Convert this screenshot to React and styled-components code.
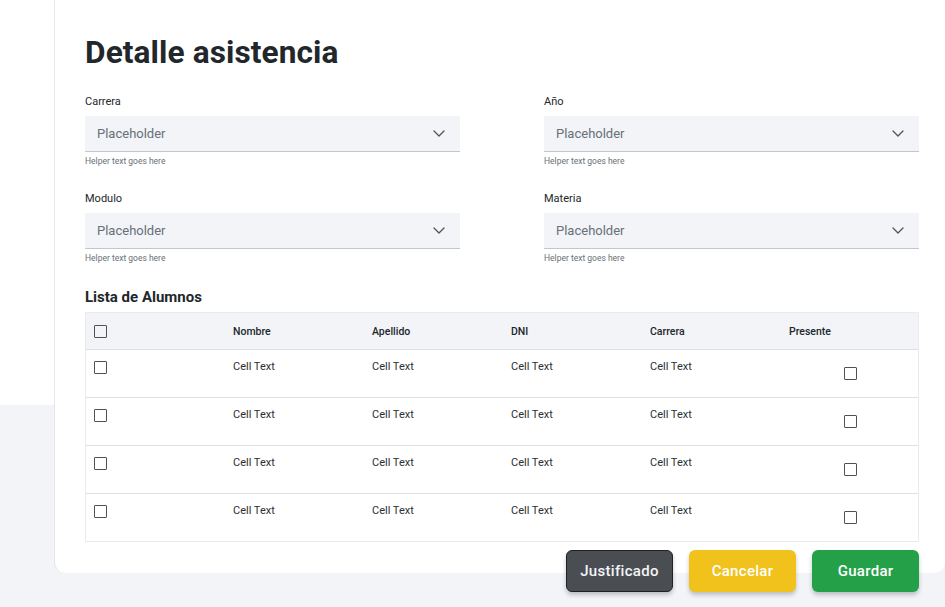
import React from 'react';
import styled, { createGlobalStyle } from 'styled-components';

const GlobalStyle = createGlobalStyle`
  body {
    margin: 0;
    background: #f2f4f8;
    font-family: Roboto, "Liberation Sans", sans-serif;
    color: #21272a;
  }
`;

const Page = styled.div`
  display: flex;
  align-items: flex-start;
  width: 945px;
  height: 607px;
  overflow: hidden;
`;

const SideFill = styled.div`
  width: 54px;
  height: 405px;
  background: #fff;
  flex-shrink: 0;
`;

const Card = styled.main`
  flex: 1;
  background: #fff;
  border-left: 1px solid #e4e6ea;
  border-radius: 0 0 11px 11px;
  padding: 34px 26px 0 30px;
  box-sizing: border-box;
  height: 573px;
`;

const Title = styled.h1`
  margin: 0;
  font-size: 31.6px;
  line-height: 38px;
  font-weight: 700;
  color: #21272a;
  letter-spacing: 0.1px;
`;

const FieldGrid = styled.div`
  display: grid;
  grid-template-columns: 1fr 1fr;
  column-gap: 84px;
  row-gap: 25px;
  margin-top: 23px;
`;

const Field = styled.div`
  display: flex;
  flex-direction: column;
`;

const Label = styled.label`
  font-size: 11px;
  line-height: 14px;
  color: #21272a;
  margin-bottom: 7px;
`;

const SelectBox = styled.div`
  display: flex;
  align-items: center;
  justify-content: space-between;
  height: 36px;
  padding: 0 15px 0 12px;
  background: #f2f4f8;
  border-bottom: 1px solid #c1c7cd;
  box-sizing: border-box;
  font-size: 13px;
  color: #697077;
`;

const Helper = styled.span`
  font-size: 8.5px;
  line-height: 11px;
  margin-top: 4px;
  color: #697077;
`;

const SectionTitle = styled.h2`
  margin: 24px 0 6px;
  font-size: 15px;
  line-height: 18px;
  font-weight: 700;
  color: #21272a;
`;

const Table = styled.div`
  border: 1px solid #e9ebee;
  border-top: none;
`;

const Row = styled.div`
  display: grid;
  grid-template-columns: 147px repeat(4, 139px) 1fr;
  height: ${p => (p.$head ? '37px' : '48px')};
  background: ${p => (p.$head ? '#f2f4f8' : '#fff')};
  border-top: 1px solid ${p => (p.$head ? '#e9ebee' : '#dde1e6')};
  box-sizing: border-box;
  align-items: ${p => (p.$head ? 'center' : 'start')};
`;

const Cell = styled.div`
  font-size: ${p => (p.$head ? '10.5px' : '11px')};
  font-weight: ${p => (p.$head ? 500 : 400)};
  line-height: 13px;
  color: ${p => (p.$head ? '#21272a' : '#2b3034')};
  padding-top: ${p => (p.$head ? '0' : '10px')};
`;

const CheckCell = styled.div`
  padding-left: 8px;
  padding-top: ${p => (p.$head ? '0' : '11px')};
  display: flex;
`;

const PresentCell = styled.div`
  display: flex;
  align-self: center;
  justify-content: center;
  padding-right: 7px;
`;

const Box = styled.span`
  display: block;
  width: 13px;
  height: 13px;
  border: 1.5px solid #4d5358;
  box-sizing: border-box;
  border-radius: 1px;
`;

const Actions = styled.div`
  display: flex;
  justify-content: flex-end;
  gap: 16px;
  margin-top: 8px;
`;

const Button = styled.button`
  width: 107px;
  height: 42px;
  border-radius: 6px;
  border: ${p => (p.$dark ? '1.5px solid #1f2224' : 'none')};
  background: ${p => p.$bg};
  color: ${p => (p.$dark ? '#f2f4f8' : '#fff')};
  font-family: Roboto, "Liberation Sans", sans-serif;
  font-size: 15px;
  font-weight: 500;
  letter-spacing: 0.3px;
  box-shadow: 0 3px 4px rgba(0, 0, 0, 0.22);
  cursor: pointer;
`;

const Chevron = () => (
  <svg width="12" height="7" viewBox="0 0 12 7" fill="none">
    <path d="M1 1l5 5 5-5" stroke="#4d5358" strokeWidth="1.3" strokeLinecap="round" strokeLinejoin="round" />
  </svg>
);

const fields = ['Carrera', 'Año', 'Modulo', 'Materia'];
const columns = ['Nombre', 'Apellido', 'DNI', 'Carrera'];

const App = () => (
  <>
    <GlobalStyle />
    <Page>
      <SideFill />
      <Card>
        <Title>Detalle asistencia</Title>

        <FieldGrid>
          {fields.map(f => (
            <Field key={f}>
              <Label>{f}</Label>
              <SelectBox>
                Placeholder
                <Chevron />
              </SelectBox>
              <Helper>Helper text goes here</Helper>
            </Field>
          ))}
        </FieldGrid>

        <SectionTitle>Lista de Alumnos</SectionTitle>
        <Table>
          <Row $head>
            <CheckCell $head><Box /></CheckCell>
            {columns.map(c => <Cell $head key={c}>{c}</Cell>)}
            <Cell $head>Presente</Cell>
          </Row>
          {[1, 2, 3, 4].map(i => (
            <Row key={i}>
              <CheckCell><Box /></CheckCell>
              {columns.map(c => <Cell key={c}>Cell Text</Cell>)}
              <PresentCell><Box /></PresentCell>
            </Row>
          ))}
        </Table>

        <Actions>
          <Button $dark $bg="#4a4e52">Justificado</Button>
          <Button $bg="#f1c21b">Cancelar</Button>
          <Button $bg="#24a148">Guardar</Button>
        </Actions>
      </Card>
    </Page>
  </>
);

export default App;
